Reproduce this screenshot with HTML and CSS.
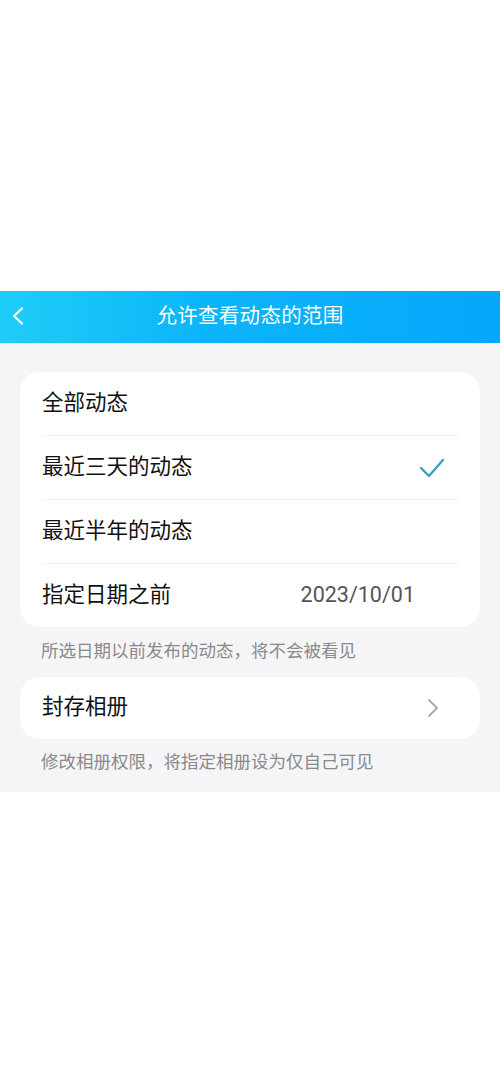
FILE: index.html
```html
<!DOCTYPE html>
<html lang="zh-CN">
<head>
    <meta charset="UTF-8">
    <meta name="viewport" content="width=device-width, initial-scale=1.0">
    <title>允许查看动态的范围</title>
    <link rel="stylesheet" href="styles.css">
</head>
<body>

    <div class="top-space"></div>

    <div class="nav-bar">
        <div class="back-btn">
            <svg width="14" height="18" viewBox="0 0 14 18">
                <polyline points="11,1.5 3,9 11,16.5" fill="none" stroke="#fff" stroke-width="2.2" stroke-linecap="round" stroke-linejoin="round"/>
            </svg>
        </div>
        <div class="nav-title">允许查看动态的范围</div>
    </div>

    <div class="content">
        <div class="card">
            <div class="row">
                <span class="row-label">全部动态</span>
            </div>
            <div class="row">
                <span class="row-label">最近三天的动态</span>
                <svg class="check" width="26" height="20" viewBox="0 0 26 20">
                    <polyline points="2,10 10,18 24,2" fill="none" stroke="#3a9ec4" stroke-width="2.4" stroke-linecap="round" stroke-linejoin="round"/>
                </svg>
            </div>
            <div class="row">
                <span class="row-label">最近半年的动态</span>
            </div>
            <div class="row">
                <span class="row-label">指定日期之前</span>
                <span class="row-value">2023/10/01</span>
            </div>
        </div>
        <p class="tip">所选日期以前发布的动态，将不会被看见</p>

        <div class="card">
            <div class="row short">
                <span class="row-label">封存相册</span>
                <svg class="arrow" width="14" height="20" viewBox="0 0 14 20">
                    <polyline points="3,2 11,10 3,18" fill="none" stroke="#a8a8a8" stroke-width="1.8" stroke-linecap="round" stroke-linejoin="round"/>
                </svg>
            </div>
        </div>
        <p class="tip last">修改相册权限，将指定相册设为仅自己可见</p>
    </div>

</body>
</html>
```

FILE: styles.css
```css
body {
    margin: 0;
    background-color: #fff;
    font-family: "Noto Sans CJK SC", "Noto Sans", sans-serif;
}

.top-space {
    height: 291px;
}

.nav-bar {
    height: 52px;
    display: flex;
    align-items: center;
    justify-content: center;
    position: relative;
    background: linear-gradient(90deg, #1ecef7 0%, #0cb5f9 40%, #06a7fb 100%);
}

.back-btn {
    position: absolute;
    left: 11px;
    top: 16px;
    display: flex;
}

.nav-title {
    color: #fff;
    font-size: 20.5px;
    letter-spacing: 0.3px;
    margin-bottom: 6px;
}

.content {
    background-color: #f5f5f7;
    padding: 29px 20px 1px;
}

.card {
    background-color: #fff;
    border-radius: 20px;
}

.row {
    height: 63px;
    margin: 0 22px;
    display: flex;
    align-items: center;
    justify-content: space-between;
    border-bottom: 1.5px solid #efeff1;
}

.row:last-child {
    border-bottom: none;
}

.row.short {
    height: 62px;
}

.row-label {
    font-size: 21.5px;
    color: #111;
    margin-bottom: 7px;
}

.row-value {
    font-size: 21.5px;
    color: #555;
    font-family: Roboto, "Noto Sans", sans-serif;
    margin-right: 43px;
    margin-bottom: 2px;
}

.check {
    margin-right: 13px;
}

.arrow {
    margin-right: 18px;
}

.tip {
    margin: 0;
    padding: 10px 0 0 21px;
    height: 40px;
    font-size: 17.5px;
    color: #8a8a8a;
}

.tip.last {
    padding-top: 9px;
    height: 43px;
}
```
